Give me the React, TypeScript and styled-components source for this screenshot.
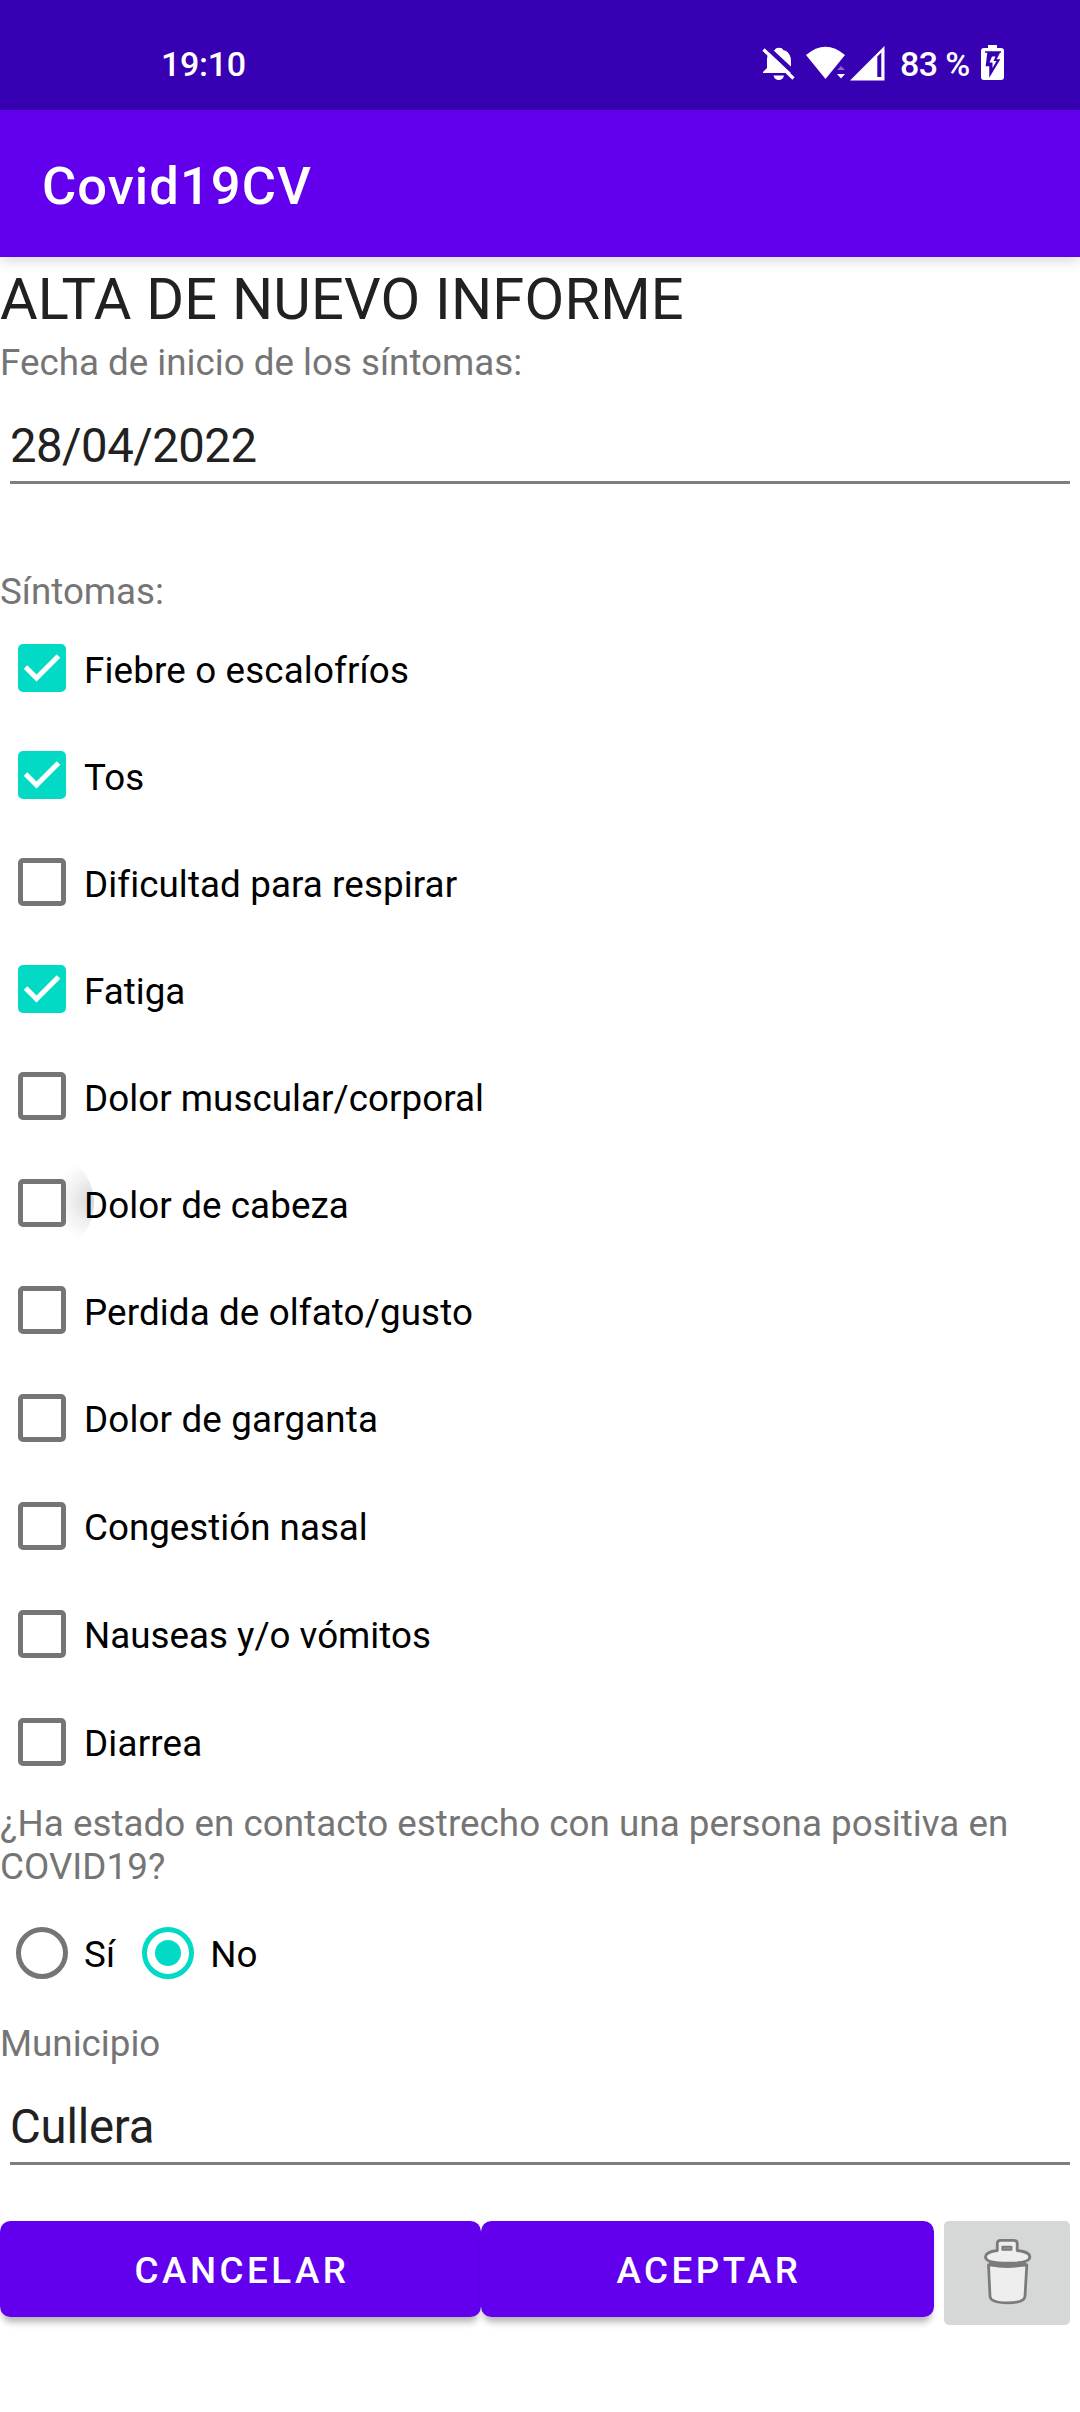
import React, { useState } from "react";
import styled, { createGlobalStyle } from "styled-components";

const GlobalStyle = createGlobalStyle`
  * { box-sizing: border-box; }
  body { margin: 0; background: #fff; }
`;

const Screen = styled.div`
  display: flex;
  flex-direction: column;
  width: 1080px;
  height: 2412px;
  overflow: hidden;
  background: #fff;
  font-family: Roboto, "Noto Sans", sans-serif;
  font-size: 36.75px;
  line-height: 43px;
  color: #000;
`;

const StatusBar = styled.header`
  display: flex;
  justify-content: space-between;
  height: 110px;
  padding: 43px 75px 0 161px;
  background: #3700b3;
  color: #fff;
  font-size: 34px;
  font-weight: 500;
  line-height: 42px;
  letter-spacing: -0.3px;
`;

const StatusIcons = styled.div`
  display: flex;
  align-items: flex-start;
  svg { display: block; margin-top: -3px; }
`;

const Percent = styled.span`
  width: 80px;
  white-space: nowrap;
  letter-spacing: -0.6px;
`;

const AppBar = styled.div`
  display: flex;
  align-items: center;
  height: 147px;
  padding: 6px 42px 0;
  background: #6200ee;
  box-shadow: 0 3px 12px rgba(0, 0, 0, 0.17);
  color: #fff;
  font-size: 52.5px;
  font-weight: 500;
  letter-spacing: 1.05px;
`;

const Form = styled.main`
  display: flex;
  flex-direction: column;
`;

const Heading = styled.h1`
  margin: 6px 0 0;
  height: 78px;
  font-size: 57.75px;
  font-weight: 400;
  line-height: 72px;
  letter-spacing: 0.2px;
  color: #212121;
`;

const Label = styled.p<{ $top?: number; $spacing?: number }>`
  margin: ${(p) => p.$top ?? 0}px 0 0;
  letter-spacing: ${(p) => p.$spacing ?? 0}px;
  color: #757575;
`;

const Field = styled.div<{ $spacing: number }>`
  display: flex;
  align-items: flex-end;
  height: 100px;
  margin: 0 10px;
  padding-bottom: 10px;
  border-bottom: 3px solid #7e7e7e;
  font-size: 47.25px;
  line-height: 50px;
  letter-spacing: ${(p) => p.$spacing}px;
  color: #212121;
`;

const CheckList = styled.div`
  display: flex;
  flex-direction: column;
  margin-top: 1px;
`;

const CheckRow = styled.div<{ $height: number }>`
  position: relative;
  display: flex;
  align-items: flex-start;
  gap: 18px;
  height: ${(p) => p.$height}px;
  padding: 30px 0 0 18px;
`;

const CheckBox = styled.span<{ $on: boolean }>`
  position: relative;
  display: block;
  width: 48px;
  height: 48px;
  border: 5px solid ${(p) => (p.$on ? "#03dac5" : "#757575")};
  border-radius: 5px;
  background: ${(p) => (p.$on ? "#03dac5" : "#fff")};
  svg { display: block; margin: -5px; }
`;

const OptionText = styled.span<{ $top: number; $spacing?: number }>`
  position: relative;
  padding-top: ${(p) => p.$top}px;
  letter-spacing: ${(p) => p.$spacing ?? 0.1}px;
`;

const Ripple = styled.span`
  position: absolute;
  left: -10px;
  top: 2px;
  width: 104px;
  height: 104px;
  border-radius: 50%;
  background: radial-gradient(circle 42px at 100% 48%, rgba(0, 0, 0, 0.17), rgba(0, 0, 0, 0.06) 55%, rgba(0, 0, 0, 0));
`;

const RadioGroup = styled.div`
  display: flex;
  align-items: center;
  gap: 27px;
  height: 84px;
  margin-top: 23px;
  padding-left: 16px;
`;

const Radio = styled.div`
  display: flex;
  align-items: center;
  gap: 16px;
  height: 84px;
`;

const RadioCircle = styled.span<{ $on: boolean }>`
  display: grid;
  place-items: center;
  width: 52px;
  height: 52px;
  border: 5px solid ${(p) => (p.$on ? "#03dac5" : "#757575")};
  border-radius: 50%;
  &::after {
    content: "";
    width: 26px;
    height: 26px;
    border-radius: 50%;
    background: ${(p) => (p.$on ? "#03dac5" : "transparent")};
  }
`;

const Actions = styled.div`
  display: flex;
  align-items: flex-start;
  margin-top: 56px;
`;

const Button = styled.button<{ $width: number }>`
  width: ${(p) => p.$width}px;
  height: 96px;
  padding: 3px 0 0 3px;
  border: 0;
  border-radius: 10.5px;
  background: #6200ee;
  box-shadow: 0 8px 7px -3px rgba(0, 0, 0, 0.3);
  color: #fff;
  font-family: inherit;
  font-size: 36.75px;
  font-weight: 500;
  letter-spacing: 3.5px;
`;

const DeleteButton = styled.button`
  display: block;
  width: 126px;
  height: 104px;
  margin-left: 10px;
  padding: 0;
  border: 0;
  border-radius: 5px;
  background: #d6d7d7;
  svg { display: block; }
`;

const symptoms = [
  { name: "Fiebre o escalofríos", on: true, height: 107, top: 5, spacing: 0.15 },
  { name: "Tos", on: true, height: 107, top: 5, spacing: 0.1 },
  { name: "Dificultad para respirar", on: false, height: 107, top: 5, spacing: 0.1 },
  { name: "Fatiga", on: true, height: 107, top: 5, spacing: 0 },
  { name: "Dolor muscular/corporal", on: false, height: 107, top: 5, spacing: 0.05 },
  { name: "Dolor de cabeza", on: false, height: 107, top: 5, spacing: 0.1, pressed: true },
  { name: "Perdida de olfato/gusto", on: false, height: 108, top: 5, spacing: 0.12 },
  { name: "Dolor de garganta", on: false, height: 108, top: 4, spacing: 0.15 },
  { name: "Congestión nasal", on: false, height: 108, top: 4, spacing: 0 },
  { name: "Nauseas y/o vómitos", on: false, height: 108, top: 4, spacing: 0 },
  { name: "Diarrea", on: false, height: 108, top: 4, spacing: 0.2 },
];

const DeviceIcons = () => (
  <svg width="142" height="44" viewBox="0 0 142 44" fill="#fff">
    <path d="M9 20C9 14 12 11 17 10C17 7 25 7 25 10C30 11 33 15 33 21V28L36 32V33H5V32L9 28Z" />
    <path d="M15.500 35.500H26C25 41.500 16.500 41.500 15.500 35.500Z" />
    <path d="M7.500 6L39 35.500" stroke="#3700b3" strokeWidth="4.500" />
    <path d="M5.500 9.500L35.500 38.500" stroke="#fff" strokeWidth="3.200" />
    <path d="M48 15Q67.500 -1.500 87 15L67.500 39Z" />
    <path d="M77.500 31L84 22H90V31Z" fill="#3700b3" />
    <path d="M79 30L83 26L87 30Z" opacity=".4" />
    <path d="M79 34H87L83 38.500Z" />
    <path d="M92 40.500L126.500 6V40.500Z" />
    <path d="M119.300 16.500L123.300 12.500V37H119.300Z" fill="#3700b3" />
  </svg>
);

const BatteryIcon = () => (
  <svg width="25" height="44" viewBox="0 0 25 44" fill="#fff">
    <path d="M8 5H17V8H21Q24 8 24 11V37Q24 40 21 40H4Q1 40 1 37V11Q1 8 4 8H8Z" />
    <path d="M5 12H21M8 13L6.500 25.500H10V35L19 20H15.500L19 13Z" fill="#3700b3" stroke="#3700b3" strokeWidth="1.500" />
    <path d="M12 16.500L9.500 22.500H12.500V28L16.500 21H13.500L15.500 16.500Z" />
  </svg>
);

const TrashIcon = () => (
  <svg width="126" height="104" viewBox="0 0 126 104" fill="#eee" stroke="#7b7b7b" strokeWidth="2.800" strokeLinejoin="round">
    <path d="M44.500 44L46 75Q46.200 81.800 63.500 81.800Q80.800 81.800 81 75L82.800 44Z" />
    <path d="M45 42.500Q63.500 47.500 82.300 42.500" fill="none" strokeWidth="4.200" />
    <path d="M53.300 29.500V22.500Q53.300 19.300 56.500 19.300H70Q73.200 19.300 73.200 22.500V29.500C82 30.500 85.800 33 85.800 36C85.800 40 78 42.200 63.500 42.200C49 42.200 41.500 40 41.500 36C41.500 33 45 30.500 53.300 29.500Z" />
    <path d="M58.300 25.600H67.500V28.800H58.300Z" fill="#909090" strokeWidth="1.800" />
  </svg>
);

export default function App() {
  const [checked, setChecked] = useState(symptoms.map((s) => s.on));
  const [contact, setContact] = useState("No");
  return (
    <>
      <GlobalStyle />
      <Screen>
        <StatusBar>
          <span>19:10</span>
          <StatusIcons>
            <DeviceIcons />
            <Percent>83 %</Percent>
            <BatteryIcon />
          </StatusIcons>
        </StatusBar>
        <AppBar>Covid19CV</AppBar>
        <Form>
          <Heading>ALTA DE NUEVO INFORME</Heading>
          <Label>Fecha de inicio de los síntomas:</Label>
          <Field $spacing={-0.5}>28/04/2022</Field>
          <Label $top={86}>Síntomas:</Label>
          <CheckList>
            {symptoms.map((s, i) => (
              <CheckRow
                key={s.name}
                $height={s.height}
                onClick={() => setChecked(checked.map((c, j) => (i === j ? !c : c)))}
              >
                {s.pressed && <Ripple />}
                <CheckBox $on={checked[i]}>
                  {checked[i] && (
                    <svg width="48" height="48" viewBox="0 0 48 48">
                      <path d="M7.500 23L18.500 34L40.500 12" fill="none" stroke="#fff" strokeWidth="5" />
                    </svg>
                  )}
                </CheckBox>
                <OptionText $top={s.top} $spacing={s.spacing}>{s.name}</OptionText>
              </CheckRow>
            ))}
          </CheckList>
          <Label $top={6} $spacing={0.04}>
            ¿Ha estado en contacto estrecho con una persona positiva en COVID19?
          </Label>
          <RadioGroup>
            {["Sí", "No"].map((o) => (
              <Radio key={o} onClick={() => setContact(o)}>
                <RadioCircle $on={contact === o} />
                <OptionText $top={3}>{o}</OptionText>
              </Radio>
            ))}
          </RadioGroup>
          <Label $top={27}>Municipio</Label>
          <Field $spacing={-0.2}>Cullera</Field>
          <Actions>
            <Button $width={481}>CANCELAR</Button>
            <Button $width={453}>ACEPTAR</Button>
            <DeleteButton aria-label="Eliminar">
              <TrashIcon />
            </DeleteButton>
          </Actions>
        </Form>
      </Screen>
    </>
  );
}
